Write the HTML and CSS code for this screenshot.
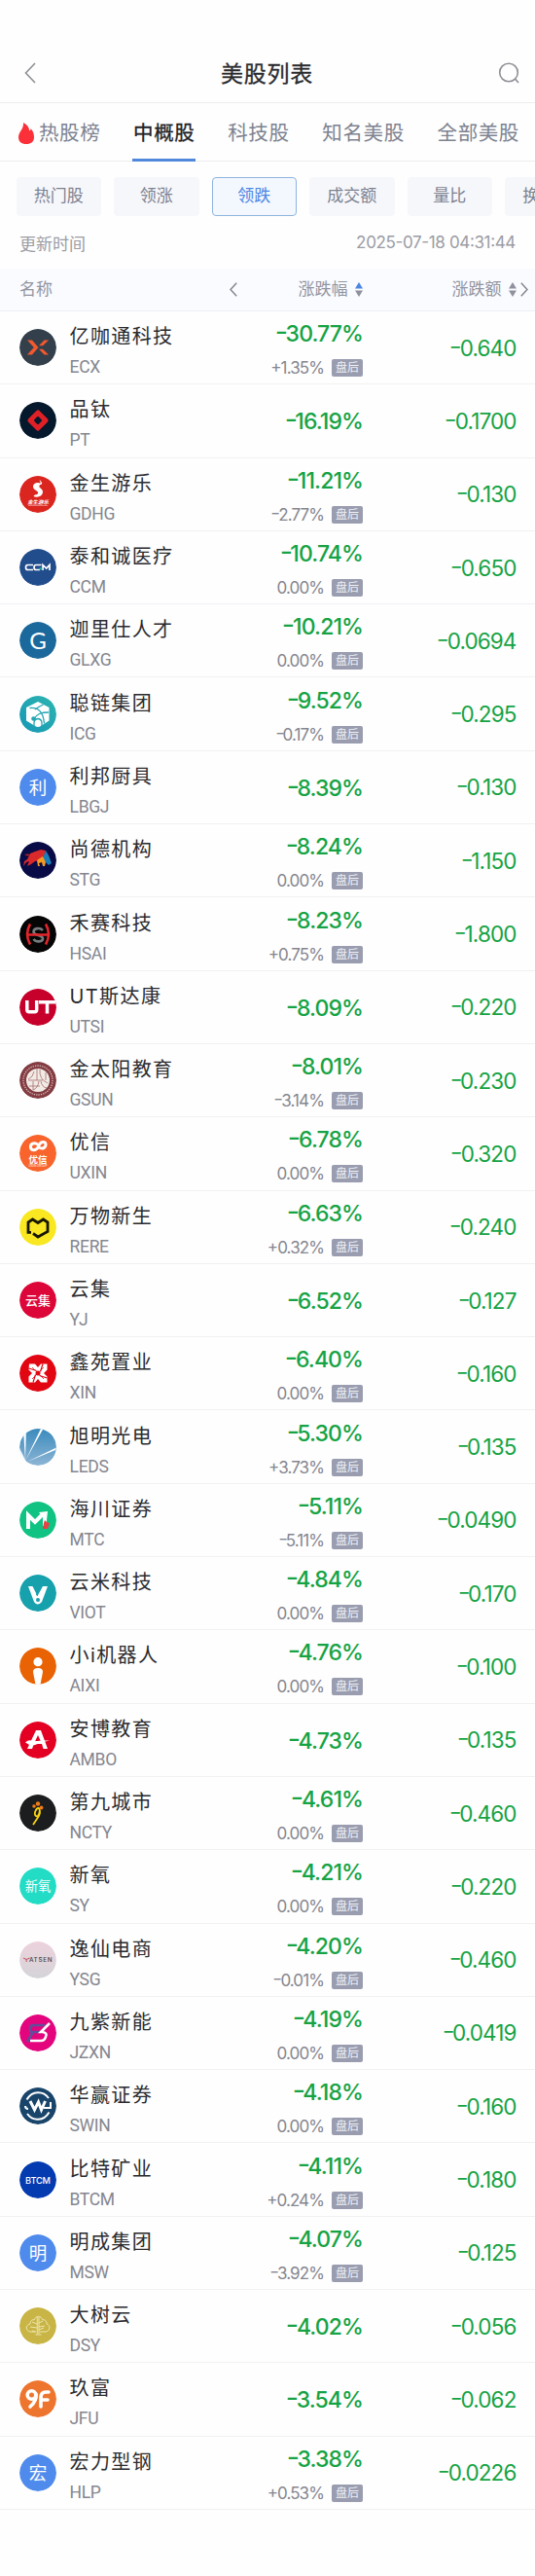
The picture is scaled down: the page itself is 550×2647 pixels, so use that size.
FILE: index.html
```html
<!DOCTYPE html>
<html lang="zh-CN">
<head>
<meta charset="utf-8">
<title>美股列表</title>
<link rel="stylesheet" href="styles.css">
</head>
<body>
<header class="topbar">
  <svg class="back" viewBox="0 0 12 22"><path d="M11 1 1.5 11 11 21"/></svg>
  <h1>美股列表</h1>
  <svg class="search" viewBox="0 0 22 22"><circle cx="11" cy="10.500" r="9.300"/><path d="m17.500 17 3.500 4"/></svg>
</header>
<nav class="tabs">
  <a class="tab hot"><svg class="flame" viewBox="0 0 16 22"><path d="M5 0c4 2 6 5 6.300 8.500C12.400 8 12.700 7 12.600 6c2.200 2.500 3.400 5.500 3.400 8.700C16 19.500 13 22 8 22s-8-2.500-8-7c0-3 1.500-5 3-7.500C4.500 5 5.200 3 5 0z"/></svg>热股榜</a>
  <a class="tab active">中概股</a>
  <a class="tab">科技股</a>
  <a class="tab">知名美股</a>
  <a class="tab">全部美股</a>
</nav>
<div class="chips">
  <span class="chip">热门股</span><span class="chip">领涨</span><span class="chip on">领跌</span><span class="chip">成交额</span><span class="chip">量比</span><span class="chip">换手率</span>
</div>
<div class="update"><span>更新时间</span><span class="time">2025-07-18 04:31:44</span></div>
<div class="thead">
  <span class="th-name">名称</span>
  <svg class="chev" viewBox="0 0 8 15"><path d="M7.200.8 1 7.500l6.200 6.700"/></svg>
  <span class="th-pct">涨跌幅<svg class="sort up" viewBox="0 0 8 15"><path class="a" d="M4 0l4 6.500H0z"/><path d="M4 15 0 8.500h8z"/></svg></span>
  <span class="th-chg">涨跌额<svg class="sort" viewBox="0 0 8 15"><path class="a" d="M4 0l4 6.500H0z"/><path d="M4 15 0 8.500h8z"/></svg></span>
  <svg class="chev last" viewBox="0 0 8 15"><path d="M.8.8 7 7.500.8 14.200"/></svg>
</div>
<main id="list"></main>
<script src="list.js"></script>
</body>
</html>
```
FILE: styles.css
```css
* { box-sizing: border-box; }
body {
  margin: 0;
  height: 2647px;
  background: #fefefe;
  color: #2b2b2e;
  font-family: Inter, "Noto Sans CJK SC", sans-serif;
  overflow: hidden;
}
svg { display: block; flex: none; }
.topbar {
  display: flex;
  align-items: center;
  justify-content: space-between;
  height: 106px;
  padding: 45px 16px 0 25px;
  border-bottom: 1px solid #ededf0;
}
.topbar h1 {
  margin: -3px 0 0;
  font-size: 23px;
  font-weight: 400;
  letter-spacing: .8px;
  -webkit-text-stroke: .3px #2b2b2e;
}
.back, .search { fill: none; stroke: #8f9096; stroke-width: 1.6; }
.back { width: 12px; height: 22px; }
.search { width: 22px; height: 22px; }
.tabs {
  display: flex;
  gap: 31.800px;
  height: 60px;
  padding-left: 19px;
  border-bottom: 1px solid #ededf0;
  color: #7d8290;
  font-size: 20.500px;
  letter-spacing: .6px;
  white-space: nowrap;
}
.tab { display: flex; align-items: center; height: 60px; padding: 0 1px; border-bottom: 3px solid transparent; }
.tab.active { color: #202124; border-bottom-color: #5089dc; -webkit-text-stroke: .3px #202124; }
.tab.hot { padding: 0 1px 0 0; }
.flame { width: 16px; height: 22px; margin: 4px 5px 0 0; fill: #fb3038; }
.chips { display: flex; gap: 13px; padding: 16px 0 0 16.500px; overflow: hidden; }
.chip {
  flex: none;
  width: 87.500px;
  height: 40px;
  border-radius: 4px;
  background: #f6f7fb;
  color: #7d8290;
  font-size: 17px;
  line-height: 39px;
  text-align: center;
}
.chip.on { background: #f3f8fe; color: #4c86e4; border: 1px solid #8fb4df; line-height: 37px; }
.update {
  display: flex;
  justify-content: space-between;
  align-items: center;
  height: 54px;
  padding: 0 20px;
  color: #9b9ca4;
  font-size: 17px;
}
.time { letter-spacing: -.35px; font-feature-settings: "case"; }
.thead {
  display: grid;
  grid-template-columns: 216px 8px 128.500px 158px 13px;
  align-items: center;
  height: 44px;
  padding-left: 20px;
  background: #f9fbff;
  border-bottom: 1px solid #eeeff2;
  color: #93959f;
  font-size: 17px;
  line-height: 24px;
}
.th-name, .th-pct, .th-chg { margin-top: -2px; }
.chev { width: 8px; height: 15px; fill: none; stroke: #85878f; stroke-width: 1.500; }
.chev.last { margin-left: 4px; }
.th-pct, .th-chg { display: flex; justify-content: flex-end; align-items: center; gap: 7px; }
.sort { width: 8px; height: 15px; margin-top: 2px; fill: #8f929e; }
.sort.up .a { fill: #4c86e4; }
.row {
  display: grid;
  grid-template-columns: 52px 138px 183px 157.500px;
  align-items: center;
  height: 75.310px;
  border-bottom: 1px solid #f1f1f4;
}
.logo { width: 38px; height: 38px; margin-left: 20px; border-radius: 50%; overflow: hidden; }
.ident { padding: 7px 0 0 19.500px; white-space: nowrap; }
.name { font-size: 20px; line-height: 30px; letter-spacing: 1.400px; }
.code { margin-top: 3px; color: #85868f; font-family: Roboto, sans-serif; font-size: 17.500px; line-height: 26px; letter-spacing: -.3px; }
.quote { display: flex; flex-direction: column; align-items: flex-end; gap: 12px; padding-top: 2px; }
.pct, .chg { color: #16a344; font-feature-settings: "case"; text-align: right; }
.pct { font-size: 23px; font-weight: 500; line-height: 28px; letter-spacing: -.9px; }
.chg { font-size: 22.500px; letter-spacing: -.9px; }
.dash { display: inline-block; transform: translateY(-.04em) scaleX(1.25); }
.after { display: flex; align-items: center; gap: 8px; height: 18px; color: #85868f; font-size: 17px; letter-spacing: -.9px; font-feature-settings: "case"; }
.badge { width: 32px; height: 18px; border-radius: 2px; background: #9a9daf; color: #eef0f6; font-size: 12px; line-height: 17px; letter-spacing: 0; text-align: center; }
```
FILE: list.js
```js
const txt = (s, size, y, extra = '') =>
  `<text x="19" y="${y}" font-size="${size}" text-anchor="middle" fill="#fff" ${extra}>${s}</text>`;

const logos = {
  ECX: ['#333f4a', '<g fill="#f2592f"><path d="M8 11.500h5l6.500 7.500-6.500 7.500H8l6.800-7.500z"/><path d="M30 11.500h-4.500l-5.500 5.800h4zM30 26.500h-4.500L20 20.700h4z"/></g>'],
  PT: ['#05182c', '<rect x="10.800" y="10.800" width="16.400" height="16.400" rx="2.500" transform="rotate(45 19 19)" fill="#df2027"/><rect x="15.800" y="15.800" width="6.400" height="6.400" rx="1.200" transform="rotate(45 19 19)" fill="#05182c"/>'],
  GDHG: ['#db261f', '<path d="M21 4c-1 2 1.500 2 .5 3.500-3-1.500-7.500 0-7.500 3.500 0 4 6 4 5 7-.8 2-3.500.5-4.500 3 3 1.500 9.500.500 9.500-4.500 0-4-4.500-4-3.500-6.500.5-1.500 2.500-.500 2.700-2.500C23 6 21.500 5.500 21 4z" fill="#fff"/>' + txt('金生游乐', 5.4, 28.5, 'font-weight="700" font-style="italic"') + '<path d="M9 30.500h20" stroke="#f7b5b0" stroke-width=".6"/>'],
  CCM: ['#224d8d', '<g fill="none" stroke="#fff" stroke-width="1.700"><path d="M14 16.500H8.500q-2 0-2 2.500t2 2.500H14M22.500 16.500H17q-2 0-2 2.500t2 2.500h4M24 22v-5.500l3.700 3.500 3.300-3.500V22"/></g><path d="M20.500 20.500h2.800" stroke="#21b5a8" stroke-width="2"/>'],
  GLXG: ['#1b699c', txt('G', 24, 27.5, 'font-family="Lato"')],
  ICG: ['url(#icg)', '<defs><linearGradient id="icg" x1="1" x2="0" y2="1"><stop stop-color="#2eb5b0"/><stop offset="1" stop-color="#1697b5"/></linearGradient></defs><path d="m19 6 11.500 6v13.500L22 31q-3 2-6 0l-9-5.500V12z" fill="#fff"/><g fill="none" stroke="#23a5b2" stroke-width="1.300"><path d="M10.500 12.500c9-1 14 4 15 16M30 17c-7 0-12 1-15 7M24.500 9c-4 1.500-7 4-8.500 5"/><path d="M15 32v-4q0-4 4-4.500 4 .5 4 4.500v4"/></g><circle cx="14.500" cy="23.500" r="2.300" fill="#23a5b2"/>'],
  LBGJ: ['#4f8bec', txt('利', 18.5, 25.7)],
  STG: ['#080b45', '<path d="m8 18 3-6 5-2 6-2 5 1-1 5-4 5-6 1-4 3-4 2 2-5-3 1-3 4 1-5z" fill="#d9292b"/><path d="m5 13 3 1.500 3-.5-2-1.500z" fill="#b8242c"/><path d="m24 17 3-8 3 5 3 8-3 2-3-3z" fill="#187fba"/><path d="m18 19 6-4 3 6-1 4h-2l-1-4-3 1 1 3h-2z" fill="#f59b24"/>'],
  HSAI: ['#050505', '<g fill="none" stroke-width="2.600"><path d="M24 15c-3-3.500-9.500-2-9.500 1.500 0 4 9.500 3 9.500 7 0 3.500-7 4-9.500.5" stroke="#77797d"/><path d="M11 8.500q-6 10.500 0 21M27 8.500q6 10.500 0 21M8 19.500h22" stroke="#e2252b"/></g>'],
  UTSI: ['#c6002b', '<path d="M7.800 12v9.500q0 2.300 2.300 2.300h5.300q2.300 0 2.300-2.300V12M20 13.700h17M28.500 13v12.500" fill="none" stroke="#fff" stroke-width="3.500"/>'],
  GSUN: ['#823c42', '<circle cx="19" cy="19" r="15" fill="none" stroke="#d9b8b5" stroke-width="1.300" stroke-dasharray="1.300 1.100"/><circle cx="19" cy="19" r="12" fill="#f1ebe6"/><path d="M18 7v12M21 8q-1 10 8 14M15 10q-1 6-6 8M9 19h15M14 20v9M10 25h11M20 20q-1 7-6 9M22 20q1 6 6 7M27 11v8" stroke="#a76c6d" stroke-width=".8" fill="none"/>'],
  UXIN: ['#f8642b', '<g fill="none" stroke="#fff" stroke-width="3" stroke-linecap="round"><path d="M18 9.500c-4-2-7 .5-6.500 3.500.5 3.500 5.500 3.500 7.500 0l1.500-3c2-3.500 6-3 6.500-.5.500 3.500-3 5.500-6 4"/></g>' + txt('优信', 9.5, 28.5, 'font-weight="700"') + txt('UXIN GROUP', 3, 32.5)],
  RERE: ['#f9e721', '<path d="M12 24.300H9V14l4.500-3L19 14.500l5.500-3.500L29 14v9.500L19 29l-5-3.500" fill="none" stroke="#171600" stroke-width="2.800"/>'],
  YJ: ['#dc0638', txt('云集', 13, 24, 'font-weight="500"')],
  XIN: ['#e20613', '<path d="M10 9.500h6l3 3.500 3-3.500h6.500v6L25 19l3.500 3.500v6H22L19 25l-3 3.500H9.500v-6L13 19l-3.500-3.500z" fill="#fff"/><path d="m9.500 14 8 2.500M24 9.500l-2.500 8M28.500 24l-8-2.500M14 28.500l2.500-8" stroke="#e20613" stroke-width="1.200" fill="none"/><circle cx="19" cy="19" r="2.500" fill="#e20613"/><path d="m13 13 12 12M25 13 13 25" stroke="#e20613" stroke-width=".7"/>'],
  LEDS: ['url(#led)', '<defs><linearGradient id="led" x2="0" y2="1"><stop stop-color="#3a8bbd"/><stop offset="1" stop-color="#8db5d5"/></linearGradient></defs><path d="M7 0 4 2l2 30zM24.500 0 6 33 22 0zM38 19.500 8 34l29-12zM0 20v18h12l-5-4z" fill="#fff"/>'],
  MTC: ['#10c383', '<path d="M9 28V14l7 7 8-8" fill="none" stroke="#fff" stroke-width="4"/><path d="m20 11 9-1-1 9v6h-4v-9z" fill="#fff"/><path d="m26 19 2 2 3 1-2 6h-5l1-6z" fill="#e74345"/>'],
  VIOT: ['#16a1ac', '<path d="M9 12h4.500l5 10 5.500-10h5l-6 16q-4.500 5-8 0z" fill="#fff"/><circle cx="19" cy="26" r="2" fill="#16a1ac"/><path d="m18 17 1 5-2-1z" fill="#16a1ac"/>'],
  AIXI: ['#e96304', '<circle cx="19" cy="14.700" r="4.600" fill="#fff"/><path d="M14 25q0-4 5-4t5 4l-2.500 13h-5z" fill="#fff"/>'],
  AMBO: ['#e30023', '<path d="m8 28 9-19h5l7 19h-4.500L23 23h-8l-2 5zM19 14l-3 6.500h6z" fill="#fff" fill-rule="evenodd"/><path d="M6 21.500q4-4 8-1 9-1.500 17-1-8 1.300-15 4.500-6 1-10-2.500z" fill="#fff"/>'],
  NCTY: ['#1c1d1e', '<path d="M19 23q-4-1-3-5 2-5 4-4 2 3-1 8zM20 14q3 5-2 11l-4 6" fill="none" stroke="#f6d312" stroke-width="1.800"/><g fill="#ee7b1b"><circle cx="15" cy="12" r="1.800"/><circle cx="19" cy="9.500" r="2.200"/><circle cx="22.500" cy="13.500" r="1.900"/></g>'],
  SY: ['#23dcc5', txt('新氧', 13.3, 24)],
  YSG: ['url(#ysg)', '<defs><linearGradient id="ysg" x2="0" y2="1"><stop stop-color="#edd2dc"/><stop offset="1" stop-color="#d4d4d8"/></linearGradient></defs><text x="10" y="21" font-size="6.300" font-weight="500" textLength="23.500" fill="#443f43">ATSEN</text><path d="m4 17 3.200 1.500V21m0-2.500 3.300-1.500" fill="none" stroke="#c44a60"/>'],
  JZXN: ['#e4047e', '<path d="M26 11H14q-3 0-3 4t3 3h9M14 18l-6 10" fill="none" stroke="#614d9a" stroke-width="2.700"/><path d="m31 9-9 9h2q5 1 3 5-1 4-5 4H11" fill="none" stroke="#fff" stroke-width="2.600"/>'],
  SWIN: ['#19456b', '<g fill="none" stroke="#fff" stroke-width="2"><path d="M7.500 12.500c5.500-9.500 17-9.500 22.500-1.500M30.500 25.500c-5.500 9.500-17 9.500-22.500 1.500M6 19q0 3 3 3M32 15v6h-7"/><path d="m11 14 4.500 9 4-8 3 8 4-9" stroke-width="3"/></g>'],
  BTCM: ['#043bb1', txt('BTCM', 9.2, 22.5, 'font-weight="500" textLength="26"')],
  MSW: ['#4f8bec', txt('明', 18.5, 25.7)],
  DSY: ['#c9b545', '<g fill="none" stroke="#f2eab9" stroke-width=".9"><path d="M17 25h-6c-5-1-5-7 0-8 0-3 2-5 4-4 2-5 7-5 9 0 2-1 4 1 4 4 4 1 4 7-1 8h-6M18.300 10v17M20 10v17M16.500 28h6M18 17l-5-2m5 6-7-1m9-4 4-2m-4 6 6-1m-6 4 5-2m-12 3 3 1"/></g>'],
  JFU: ['#ee752d', '<g fill="none" stroke="#fff" stroke-width="3.600" stroke-linecap="round"><circle cx="12.500" cy="15" r="4.300"/><path d="M17 14q1 7-6 13M30 12h-3q-5 0-5 6v9M23 20h6"/></g>'],
  HLP: ['#4f8bec', txt('宏', 18.5, 25.7)]
};

const rows = [
  ['亿咖通科技', 'ECX', '-30.77%', '+1.35%', '-0.640'],
  ['品钛', 'PT', '-16.19%', '', '-0.1700'],
  ['金生游乐', 'GDHG', '-11.21%', '-2.77%', '-0.130'],
  ['泰和诚医疗', 'CCM', '-10.74%', '0.00%', '-0.650'],
  ['迦里仕人才', 'GLXG', '-10.21%', '0.00%', '-0.0694'],
  ['聪链集团', 'ICG', '-9.52%', '-0.17%', '-0.295'],
  ['利邦厨具', 'LBGJ', '-8.39%', '', '-0.130'],
  ['尚德机构', 'STG', '-8.24%', '0.00%', '-1.150'],
  ['禾赛科技', 'HSAI', '-8.23%', '+0.75%', '-1.800'],
  ['UT斯达康', 'UTSI', '-8.09%', '', '-0.220'],
  ['金太阳教育', 'GSUN', '-8.01%', '-3.14%', '-0.230'],
  ['优信', 'UXIN', '-6.78%', '0.00%', '-0.320'],
  ['万物新生', 'RERE', '-6.63%', '+0.32%', '-0.240'],
  ['云集', 'YJ', '-6.52%', '', '-0.127'],
  ['鑫苑置业', 'XIN', '-6.40%', '0.00%', '-0.160'],
  ['旭明光电', 'LEDS', '-5.30%', '+3.73%', '-0.135'],
  ['海川证券', 'MTC', '-5.11%', '-5.11%', '-0.0490'],
  ['云米科技', 'VIOT', '-4.84%', '0.00%', '-0.170'],
  ['小i机器人', 'AIXI', '-4.76%', '0.00%', '-0.100'],
  ['安博教育', 'AMBO', '-4.73%', '', '-0.135'],
  ['第九城市', 'NCTY', '-4.61%', '0.00%', '-0.460'],
  ['新氧', 'SY', '-4.21%', '0.00%', '-0.220'],
  ['逸仙电商', 'YSG', '-4.20%', '-0.01%', '-0.460'],
  ['九紫新能', 'JZXN', '-4.19%', '0.00%', '-0.0419'],
  ['华赢证券', 'SWIN', '-4.18%', '0.00%', '-0.160'],
  ['比特矿业', 'BTCM', '-4.11%', '+0.24%', '-0.180'],
  ['明成集团', 'MSW', '-4.07%', '-3.92%', '-0.125'],
  ['大树云', 'DSY', '-4.02%', '', '-0.056'],
  ['玖富', 'JFU', '-3.54%', '', '-0.062'],
  ['宏力型钢', 'HLP', '-3.38%', '+0.53%', '-0.0226']
];

const num = s => s.replace('-', '<span class="dash">-</span>');

document.getElementById('list').innerHTML = rows.map(([name, code, pct, after, chg]) => `
<div class="row">
  <svg class="logo" viewBox="0 0 38 38"><circle cx="19" cy="19" r="19" fill="${logos[code][0]}"/>${logos[code][1]}</svg>
  <div class="ident"><div class="name">${name}</div><div class="code">${code}</div></div>
  <div class="quote"><div class="pct">${num(pct)}</div>${after ? `<div class="after"><span>${num(after)}</span><span class="badge">盘后</span></div>` : ''}</div>
  <div class="chg">${num(chg)}</div>
</div>`).join('');
```
